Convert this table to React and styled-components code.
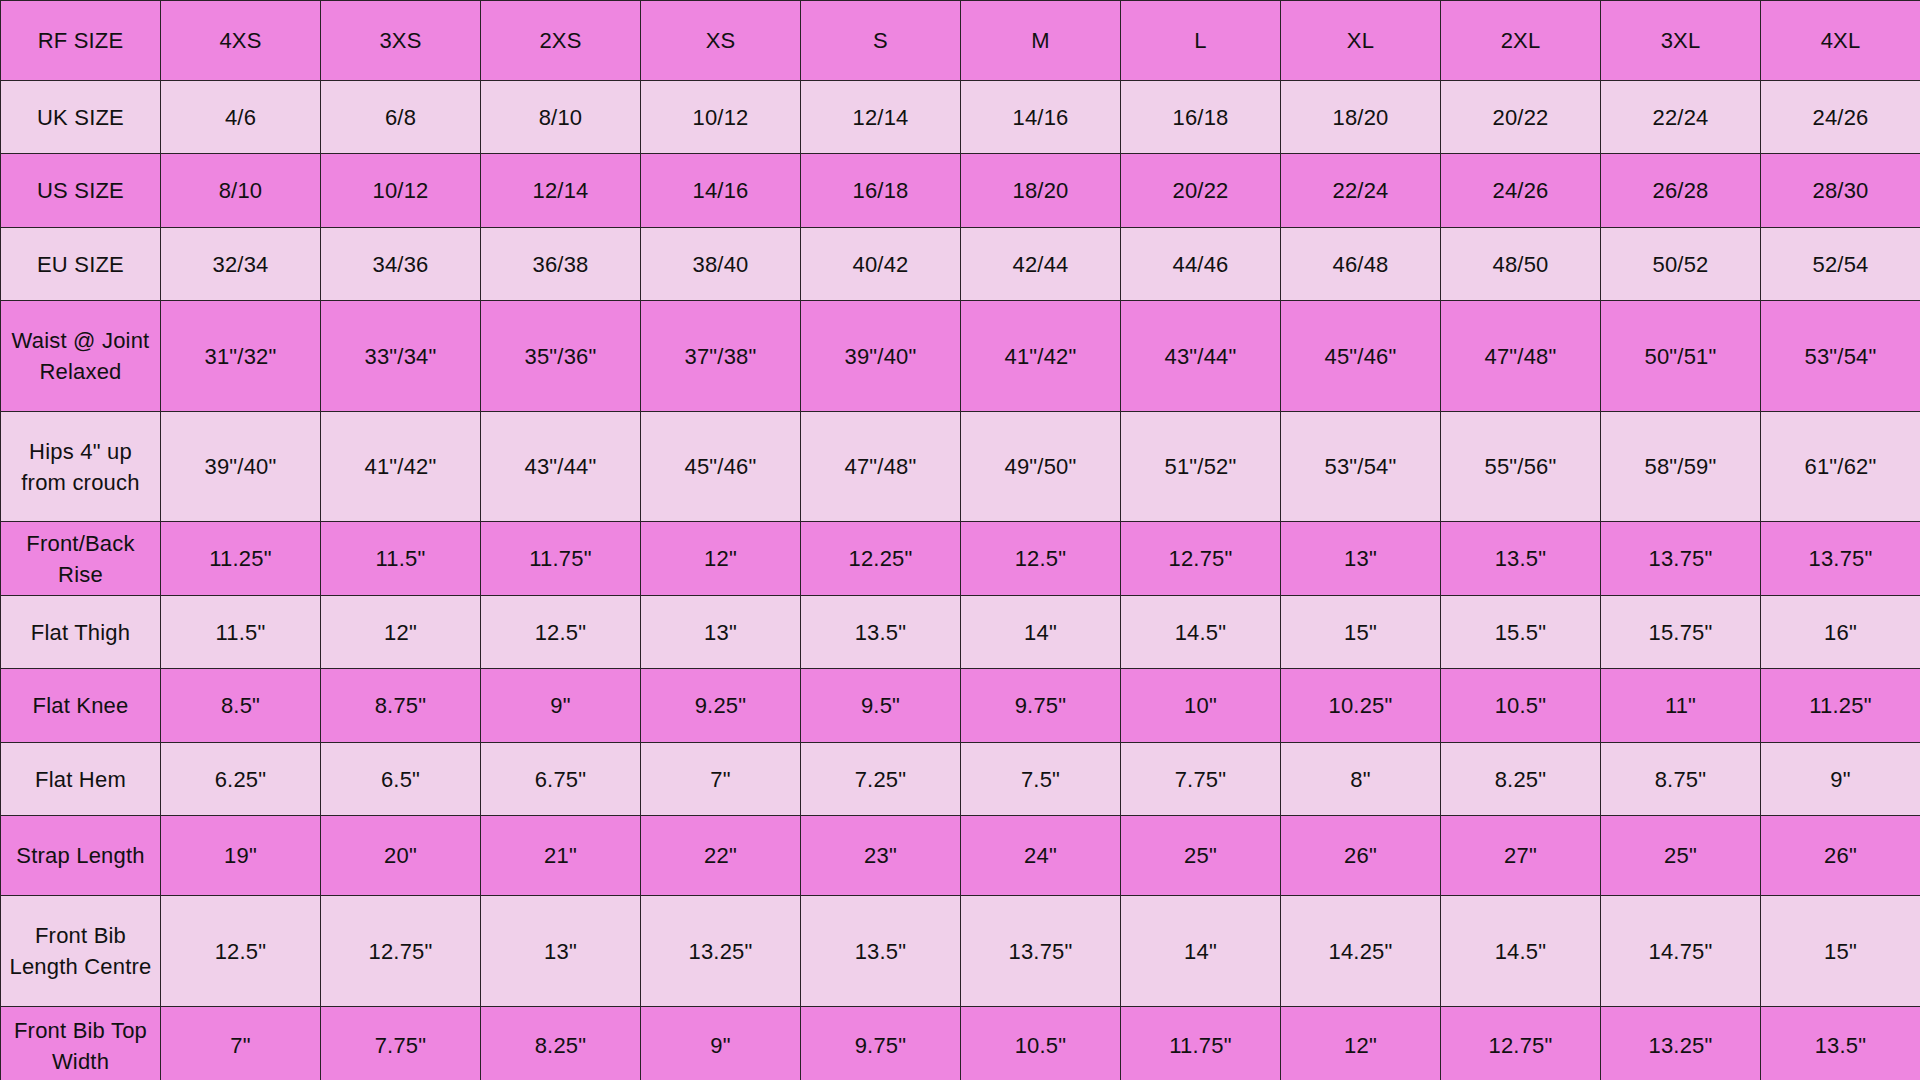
import styled, { createGlobalStyle } from "styled-components";

const GlobalStyle = createGlobalStyle`
  html, body {
    margin: 0;
    padding: 0;
    background: #ffffff;
    overflow: hidden;
  }
`;

const sizes = ["4XS", "3XS", "2XS", "XS", "S", "M", "L", "XL", "2XL", "3XL", "4XL"];

const rows = [
  { label: "UK SIZE", h: 73, values: ["4/6", "6/8", "8/10", "10/12", "12/14", "14/16", "16/18", "18/20", "20/22", "22/24", "24/26"] },
  { label: "US SIZE", h: 74, values: ["8/10", "10/12", "12/14", "14/16", "16/18", "18/20", "20/22", "22/24", "24/26", "26/28", "28/30"] },
  { label: "EU SIZE", h: 73, values: ["32/34", "34/36", "36/38", "38/40", "40/42", "42/44", "44/46", "46/48", "48/50", "50/52", "52/54"] },
  { label: ["Waist @ Joint", "Relaxed"], h: 111, values: ['31"/32"', '33"/34"', '35"/36"', '37"/38"', '39"/40"', '41"/42"', '43"/44"', '45"/46"', '47"/48"', '50"/51"', '53"/54"'] },
  { label: ['Hips 4" up', "from crouch"], h: 110, values: ['39"/40"', '41"/42"', '43"/44"', '45"/46"', '47"/48"', '49"/50"', '51"/52"', '53"/54"', '55"/56"', '58"/59"', '61"/62"'] },
  { label: ["Front/Back", "Rise"], h: 74, values: ['11.25"', '11.5"', '11.75"', '12"', '12.25"', '12.5"', '12.75"', '13"', '13.5"', '13.75"', '13.75"'] },
  { label: "Flat Thigh", h: 73, values: ['11.5"', '12"', '12.5"', '13"', '13.5"', '14"', '14.5"', '15"', '15.5"', '15.75"', '16"'] },
  { label: "Flat Knee", h: 74, values: ['8.5"', '8.75"', '9"', '9.25"', '9.5"', '9.75"', '10"', '10.25"', '10.5"', '11"', '11.25"'] },
  { label: "Flat Hem", h: 73, values: ['6.25"', '6.5"', '6.75"', '7"', '7.25"', '7.5"', '7.75"', '8"', '8.25"', '8.75"', '9"'] },
  { label: "Strap Length", h: 80, values: ['19"', '20"', '21"', '22"', '23"', '24"', '25"', '26"', '27"', '25"', '26"'] },
  { label: ["Front Bib", "Length Centre"], h: 111, values: ['12.5"', '12.75"', '13"', '13.25"', '13.5"', '13.75"', '14"', '14.25"', '14.5"', '14.75"', '15"'] },
  { label: ["Front Bib Top", "Width"], h: 78, values: ['7"', '7.75"', '8.25"', '9"', '9.75"', '10.5"', '11.75"', '12"', '12.75"', '13.25"', '13.5"'] },
];

const Page = styled.div`
  width: 1920px;
  height: 1080px;
  overflow: hidden;
  font-family: "Liberation Sans", Arial, sans-serif;
`;

const Table = styled.table`
  width: 1920px;
  table-layout: fixed;
  border-collapse: collapse;
  border-spacing: 0;
`;

const Row = styled.tr`
  height: ${(p) => p.$h}px;
  background: ${(p) => (p.$light ? "#f0d0ea" : "#ee86e0")};
`;

const Cell = styled.td`
  width: 159px;
  padding: 0;
  border: 1px solid #2a2228;
  text-align: center;
  vertical-align: middle;
  color: #111111;
  font-size: 22px;
  line-height: 31px;
  letter-spacing: 0.2px;
`;

const Line = styled.span`
  display: block;
`;

const Label = ({ text }) =>
  Array.isArray(text) ? text.map((t) => <Line key={t}>{t}</Line>) : text;

export default function App() {
  return (
    <Page>
      <GlobalStyle />
      <Table>
        <tbody>
          <Row $h={80}>
            <Cell>RF SIZE</Cell>
            {sizes.map((s) => (
              <Cell key={s}>{s}</Cell>
            ))}
          </Row>
          {rows.map((row, i) => (
            <Row key={i} $h={row.h} $light={i % 2 === 0}>
              <Cell>
                <Label text={row.label} />
              </Cell>
              {row.values.map((v, j) => (
                <Cell key={j}>{v}</Cell>
              ))}
            </Row>
          ))}
        </tbody>
      </Table>
    </Page>
  );
}
